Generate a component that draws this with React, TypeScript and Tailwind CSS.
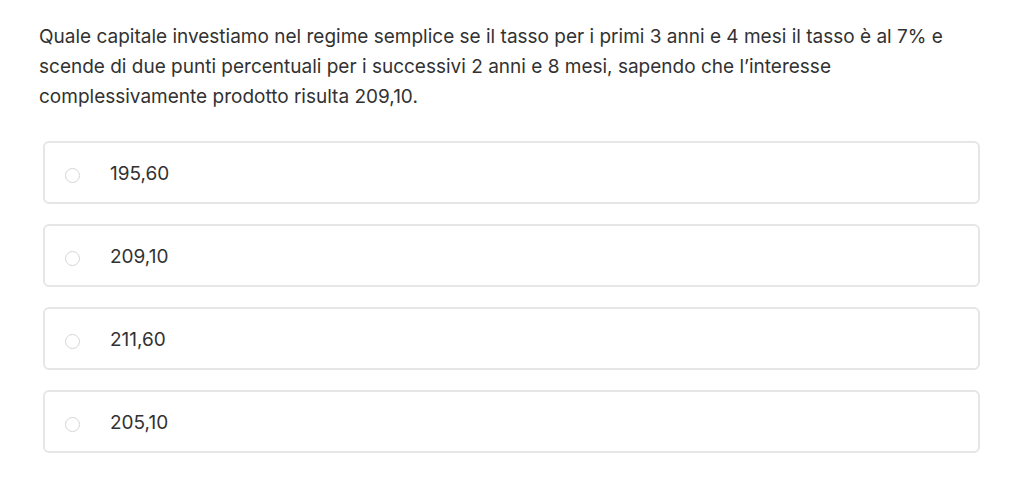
import React from "react";

const options = ["195,60", "209,10", "211,60", "205,10"];

export default function App() {
  return (
    <div className="w-[1024px] h-[484px] bg-white overflow-hidden" style={{ fontFamily: "Inter, 'Liberation Sans', Arial, sans-serif" }}>
      <div className="pl-[39px] pt-[22px]">
        <p className="text-[19px] leading-[30px] text-[#323232] w-[915px]">
          Quale capitale investiamo nel regime semplice se il tasso per i primi 3 anni e 4 mesi il tasso è al 7% e scende di due punti percentuali per i successivi 2 anni e 8 mesi, sapendo che l’interesse complessivamente prodotto risulta 209,10.
        </p>
      </div>
      <div className="flex flex-col gap-[20px] pl-[43px] pt-[29px] w-[980px]">
        {options.map((o) => (
          <div key={o} className="h-[63px] border-2 border-[#e6e6e6] rounded-[6px] flex items-center pt-[3px]">
            <span className="ml-[20px] mt-[3px] w-[15px] h-[15px] rounded-full border border-[#d6d6d6] bg-white" />
            <span className="ml-[30px] text-[19px] text-[#323232]">{o}</span>
          </div>
        ))}
      </div>
    </div>
  );
}
